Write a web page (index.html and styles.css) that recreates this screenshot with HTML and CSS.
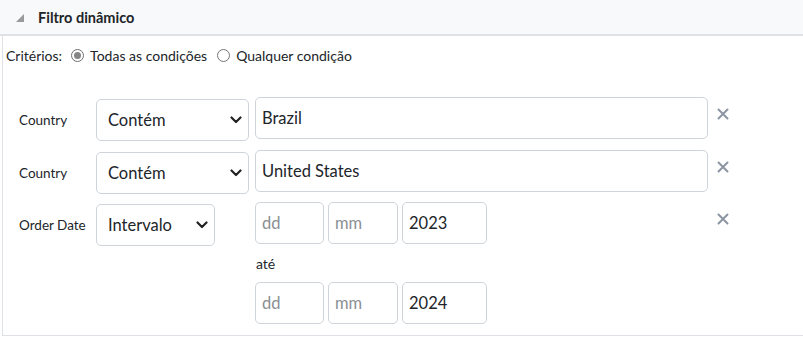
FILE: index.html
```html
<!DOCTYPE html>
<html lang="pt">
<head>
<meta charset="utf-8">
<title>Filtro dinâmico</title>
<link rel="stylesheet" href="styles.css">
</head>
<body>
<div class="panel">
  <div class="panel-header">
    <svg class="toggle" width="8" height="8" viewBox="0 0 8 8"><polygon points="8,0 8,8 0,8" fill="#9a9a9a"/></svg>
    <span class="title">Filtro dinâmico</span>
  </div>
  <div class="panel-body">
    <div class="criteria">
      <span>Critérios:</span>
      <label class="opt"><span class="radio checked"></span>Todas as condições</label>
      <label class="opt"><span class="radio"></span>Qualquer condição</label>
    </div>
    <div class="rows">
      <div class="label">Country</div>
      <div class="select wide"><span>Contém</span><svg class="chev" width="12" height="8" viewBox="0 0 12 8"><path d="M1.5 1.5 L6 6 L10.5 1.5" fill="none" stroke="#222" stroke-width="2.2" stroke-linecap="round" stroke-linejoin="round"/></svg></div>
      <div class="input">Brazil</div>
      <svg class="remove" width="12" height="12" viewBox="0 0 12 12"><path d="M1.5 1.5 L10.5 10.5 M10.5 1.5 L1.5 10.5" stroke="#8c95a1" stroke-width="2" stroke-linecap="round"/></svg>

      <div class="label">Country</div>
      <div class="select wide"><span>Contém</span><svg class="chev" width="12" height="8" viewBox="0 0 12 8"><path d="M1.5 1.5 L6 6 L10.5 1.5" fill="none" stroke="#222" stroke-width="2.2" stroke-linecap="round" stroke-linejoin="round"/></svg></div>
      <div class="input">United States</div>
      <svg class="remove" width="12" height="12" viewBox="0 0 12 12"><path d="M1.5 1.5 L10.5 10.5 M10.5 1.5 L1.5 10.5" stroke="#8c95a1" stroke-width="2" stroke-linecap="round"/></svg>

      <div class="label">Order Date</div>
      <div class="select narrow"><span>Intervalo</span><svg class="chev" width="12" height="8" viewBox="0 0 12 8"><path d="M1.5 1.5 L6 6 L10.5 1.5" fill="none" stroke="#222" stroke-width="2.2" stroke-linecap="round" stroke-linejoin="round"/></svg></div>
      <div class="dates">
        <div class="date-row">
          <div class="input d placeholder">dd</div>
          <div class="input m placeholder">mm</div>
          <div class="input y">2023</div>
        </div>
        <div class="ate">até</div>
        <div class="date-row">
          <div class="input d placeholder">dd</div>
          <div class="input m placeholder">mm</div>
          <div class="input y">2024</div>
        </div>
      </div>
      <svg class="remove" width="12" height="12" viewBox="0 0 12 12"><path d="M1.5 1.5 L10.5 10.5 M10.5 1.5 L1.5 10.5" stroke="#8c95a1" stroke-width="2" stroke-linecap="round"/></svg>
    </div>
  </div>
</div>
</body>
</html>
```

FILE: styles.css
```css
html, body {
  margin: 0;
  padding: 0;
  background: #fff;
  overflow: hidden;
}
body {
  font-family: "Lato", "Liberation Sans", sans-serif;
  color: #212529;
  width: 803px;
}
.panel {
  width: 820px;
}
.panel-header {
  height: 34px;
  background: #f8f9fa;
  border-bottom: 2px solid #dee2e6;
  display: flex;
  align-items: center;
  padding-left: 16px;
  box-sizing: content-box;
}
.toggle {
  margin-top: 2px;
}
.title {
  margin-left: 14px;
  font-weight: 700;
  font-size: 14.5px;
}
.panel-body {
  margin-left: 2px;
  border-left: 1px solid #dee2e6;
  border-bottom: 1px solid #dee2e6;
  padding: 9px 0 11px 3px;
}
.criteria {
  display: flex;
  align-items: center;
  font-size: 14px;
  height: 20px;
}
.opt {
  display: flex;
  align-items: center;
  margin-left: 9px;
}
.opt + .opt {
  margin-left: 10px;
}
.radio {
  width: 13px;
  height: 13px;
  border: 1px solid #767676;
  border-radius: 50%;
  box-sizing: border-box;
  margin-right: 6px;
  background: #fff;
  position: relative;
}
.radio.checked {
  border-color: #6f6f6f;
}
.radio.checked::after {
  content: "";
  position: absolute;
  left: 2px;
  top: 2px;
  width: 7px;
  height: 7px;
  border-radius: 50%;
  background: #858585;
}
.rows {
  margin-top: 32px;
  padding-left: 13px;
  display: grid;
  grid-template-columns: 71px 153px 453px 12px;
  column-gap: 6px;
  row-gap: 8.5px;
  align-items: start;
}
.label {
  height: 42px;
  margin-top: 2px;
  display: flex;
  align-items: center;
  font-size: 13.5px;
}
.select {
  height: 42px;
  margin-top: 2px;
  box-sizing: border-box;
  border: 1px solid #ced4da;
  border-radius: 5px;
  display: flex;
  align-items: center;
  justify-content: space-between;
  padding: 0 6px 0 11px;
  font-size: 16.5px;
  background: #fff;
}
.select.narrow {
  width: 119px;
}
.input {
  height: 42px;
  box-sizing: border-box;
  border: 1px solid #ced4da;
  border-radius: 5px;
  display: flex;
  align-items: center;
  padding-left: 6px;
  font-size: 16.5px;
  background: #fff;
}
.remove {
  margin-top: 11px;
  margin-left: 3px;
}
.dates {
  display: flex;
  flex-direction: column;
}
.date-row {
  display: flex;
  gap: 4px;
}
.input.d { width: 69px; }
.input.m { width: 70px; }
.input.y { width: 85px; }
.placeholder {
  color: #8a8f94;
}
.ate {
  font-size: 14px;
  height: 20px;
  line-height: 20px;
  margin: 10px 0 8px 1px;
}
```
